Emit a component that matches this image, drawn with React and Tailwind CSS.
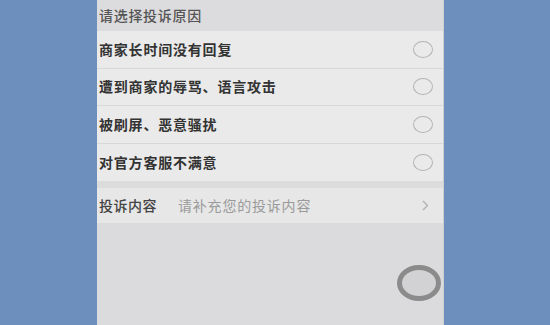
import React from "react";

const reasons = [
  "商家长时间没有回复",
  "遭到商家的辱骂、语言攻击",
  "被刷屏、恶意骚扰",
  "对官方客服不满意",
];

function Radio() {
  return (
    <div className="w-[20px] h-[17px] rounded-[50%] border-[1.5px] border-[#b4b4b4] mr-[10px]" />
  );
}

export default function App() {
  return (
    <div
      className="w-[550px] h-[325px] bg-[#6d8fbe] flex pl-[97px] overflow-hidden"
      style={{ fontFamily: '"Noto Sans CJK SC", "Noto Sans", sans-serif' }}
    >
      <div className="relative w-[347px] h-full bg-[#dbdadc] flex flex-col border-r border-[#cfcfd1]">
        <div className="h-[31px] flex items-center pl-[2px] text-[14px] tracking-[0.7px] text-[#555] font-medium bg-[#dcdbdd]">
          请选择投诉原因
        </div>
        {reasons.map((r, i) => (
          <div
            key={i}
            className={`h-[37.5px] flex items-center justify-between pl-[2px] bg-[#eaeaea] ${
              i < reasons.length - 1 ? "border-b border-[#d8d8d8]" : ""
            }`}
          >
            <span className="text-[14px] tracking-[0.8px] text-[#333] font-bold">{r}</span>
            <Radio />
          </div>
        ))}
        <div className="h-[7px] bg-[#dcdcdc]" />
        <div className="h-[35px] flex items-center pl-[2px] bg-[#e7e7e7]">
          <span className="text-[14px] tracking-[0.5px] text-[#444] font-medium">投诉内容</span>
          <span className="ml-[21px] text-[14px] tracking-[0.8px] text-[#9a9a9a]">请补充您的投诉内容</span>
          <svg
            className="ml-auto mr-[14px]"
            width="7"
            height="11"
            viewBox="0 0 7 11"
            fill="none"
            stroke="#b0b0b0"
            strokeWidth="1.3"
          >
            <path d="M1 1l4.5 4.5L1 10" />
          </svg>
        </div>
        <div className="flex-1 bg-[#dbdadc]" />
        <div className="absolute left-[300px] top-[265px] w-[44px] h-[36px] rounded-[50%] border-[5px] border-[#8b8b8b] bg-[#d2d1d3]" />
      </div>
    </div>
  );
}
